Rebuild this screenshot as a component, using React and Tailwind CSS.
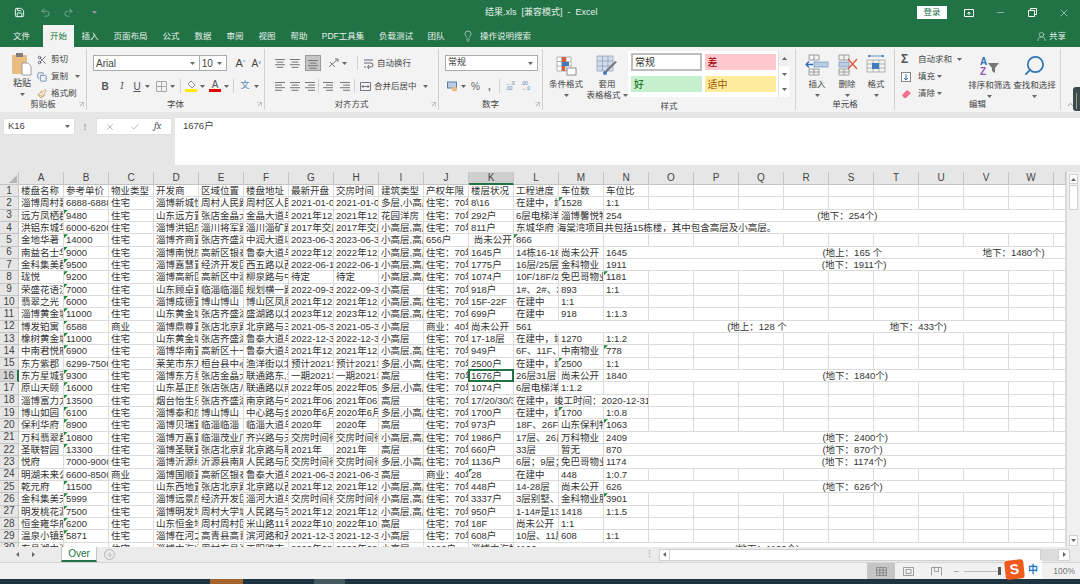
import React from 'react';
import { Save, Undo2, Redo2, Scissors, Copy, Paintbrush, Lightbulb, UserRound, Minus, X, Search, Check, Plus, ChevronUp } from 'lucide-react';

const COLS = 'ABCDEFGHIJKLMNOPQRSTUVW'.split('');
const J = '住宅：70年';
const gap = (n) => ' '.repeat(n);
const toEnd = (t, c) => ({ t, c });

// '!' in front of a value = green error triangle in that cell
const ROWS = [
  ['楼盘名称', '参考单价', '物业类型', '开发商', '区域位置', '楼盘地址', '最新开盘', '交房时间', '建筑类型', '产权年限', '楼层状况', '工程进度', '车位数', '车位比'],
  ['淄博周村碧桂园', '6888-6888', '住宅', '淄博新城悦盛', '周村人民路与', '周村区人民路', '2021-01-01', '2021-01-01', '多层,小高层', J, '8\\16', '在建中，竣工', '!1528', '1:1'],
  ['远方凤栖郡府', '!9480', '住宅', '山东远方置业', '张店金晶大道', '金晶大道与华', '2021年12月', '2021年12月', '花园洋房', J, '292户', '6层电梯洋房', '淄博馨悦物业', toEnd('254' + gap(74) + '(地下：254个)', 'col-[15/-1]')],
  ['洪铝东城华府', '6000-6200', '住宅', '淄博洪铝房产', '淄川将军路与', '淄川淄矿路与', '2017年交房', '2017年交房', '小高层,高层', J, '811户', toEnd('东城华府 海棠湾项目共包括15栋楼，其中包含高层及小高层。', 'col-[13/-1]')],
  ['金地华著', '!14000', '住宅', '淄博齐商置业', '张店齐盛湖畔', '中润大道以南', '2023-06-30', '2023-06-30', '小高层,高层', '656户', ' 尚未公开', '!866', '', ''],
  ['南益名士华府', '!9000', '住宅', '淄博南悦房产', '高新区银泰城', '鲁泰大道与北', '2022年12月', '2022年12月', '小高层,高层', J, '1645户', '14栋16-18层', '尚未公开', toEnd('1645' + gap(74) + '(地上：165 个' + gap(38) + '地下：1480个)', 'col-[15/-1]')],
  ['金科集美郡府', '!9500', '住宅', '淄博嘉慧置业', '经济开发区北', '西五路以西', '2022-06-10', '2022-06-10', '小高层,高层', J, '1775户', '16层/25层', '金科物业', toEnd('1911' + gap(74) + '(地下：1911个)', 'col-[15/-1]')],
  ['珑悦', '!9200', '住宅', '淄博高新区城', '高新区中润大', '柳泉路与中润', '待定', '待定', '小高层,高层', J, '1074户', '10F/18F/26F', '免巴哥物业服', '!1181'],
  ['荣盛花语江南', '!7000', '住宅', '山东顾卓置业', '临淄临淄区政', '规划横一路与', '2022-09-30', '2022-09-30', '小高层', J, '918户', '1#、2#、3#', '893', '1:1'],
  ['翡翠之光', '!6000', '住宅', '淄博成德置业', '博山博山', '博山区凤凰山', '2021年12月', '2021年12月', '小高层,高层', J, '15F-22F', '在建中', '1:1', ''],
  ['淄博黄金城', '!11000', '住宅', '山东黄金城置', '张店齐盛湖畔', '盛湖路以北', '2023年12月', '2023年12月', '小高层,高层', J, '699户', '在建中', '918', '1:1.3'],
  ['博发铂寓', '!6588', '商业', '淄博鼎尊置业', '张店北京路与', '北京路与三赢', '2021-05-30', '2021-05-30', '小高层', '商业：40年', '尚未公开', toEnd('561' + gap(74) + '(地上：128 个' + gap(39) + '地下：433个)', 'col-[13/-1]')],
  ['橡树黄金城', '!11000', '住宅', '山东黄金城置', '张店齐盛湖畔', '鲁泰大道与北', '2022-12-30', '2022-12-30', '小高层', J, '17-18层', '在建中，竣工', '1270', '1:1.2'],
  ['中南君悦府', '!6900', '住宅', '淄博华南置业', '高新区十一中', '鲁泰大道与北', '2021年12月', '2021年12月', '小高层,高层', J, '949户', '6F、11F、18F', '中南物业', '!778'],
  ['东方紫郡', '6299-7500', '住宅', '莱芜市东方置', '桓台县中心城', '渔洋街以北', '预计2021年', '预计2021年', '多层,小高层', J, '2500户', '在建中，竣工', '!2500', '1:1'],
  ['东方星城壹号', '!9300', '住宅', '淄博东方星城', '张店金晶大道', '联通路东,金', '一期2021年', '一期2021年', '高层', J, '1676户', '26层31层', '尚未公开', toEnd('1840' + gap(74) + '(地下：1840个)', 'col-[15/-1]')],
  ['原山天颐', '!16000', '住宅', '山东基正房产', '张店张店八大', '联通路以南', '2022年05月', '2022年05月', '多层,小高层', J, '1074户', '6层电梯洋房', '1:1.2', ''],
  ['淄博富力力城', '!13500', '住宅', '烟台怡生乐居', '张店齐盛湖畔', '南京路与中润', '2021年06月', '2021年06月', '高层', J, '17/20/30/33', toEnd('在建中，竣工时间：2020-12-31', 'col-[13/16]')],
  ['博山如园', '!6100', '住宅', '淄博泰和房产', '博山博山', '中心路与金鳞', '2020年6月', '2020年6月', '多层,小高层', J, '1700户', '在建中，竣工', '!1700', '1:0.8'],
  ['保利华府', '!8900', '住宅', '淄博贝瑞置业', '临淄临淄', '临淄大道与晏', '2020年', '2020年', '高层', J, '973户', '18F、26F', '山东保利物业', '!1063'],
  ['万科翡翠郡', '!10800', '住宅', '淄博万嘉置业', '临淄茂业广场', '齐兴路与天齐', '交房时间待定', '交房时间待定', '小高层,高层', J, '1986户', '17层、26层', '万科物业', toEnd('2409' + gap(74) + '(地下：2400个)', 'col-[15/-1]')],
  ['圣联智园', '!13300', '住宅', '淄博圣联置业', '张店北京路与', '北京路与联通', '2021年', '2021年', '高层', J, '660户', '33层', '暂无', toEnd('870' + gap(76) + '(地下：870个)', 'col-[15/-1]')],
  ['悦府', '7000-9000', '住宅', '淄博沂源绿城', '沂源县南麻镇', '人民路与历山', '交房时间待定', '交房时间待定', '多层,小高层', J, '1136户', '6层；9层；', '免巴哥物业服', toEnd('1174' + gap(74) + '(地下：1174个)', 'col-[15/-1]')],
  ['明湖未来公馆', '6600-8500', '商业', '淄博国顺置业', '高新区银泰城', '鲁泰大道与北', '2021-06-30', '2021-06-30', '高层', '商业：40年', '!28', '在建中', '448', '1:0.7'],
  ['乾元府', '!11500', '住宅', '山东西地置业', '张店北京路与', '北京路以西', '2021年12月', '2021年12月', '小高层,高层', J, '448户', '14-28层', '尚未公开', toEnd('626' + gap(76) + '(地下：626个)', 'col-[15/-1]')],
  ['金科集美天宸', '!5999', '住宅', '淄博远景房产', '经济开发区北', '淄河大道与北', '交房时间待定', '交房时间待定', '小高层,高层', J, '3337户', '3层别墅、', '金科物业服务', '!3901'],
  ['明发桃花源', '!7500', '住宅', '淄博明发地产', '周村大学城', '人民路与学府', '2021年12月', '2021年12月', '小高层,高层', J, '950户', '1-14#是13层', '1418', '1:1.5'],
  ['恒金雍华府', '!6200', '住宅', '山东恒金地产', '周村周村区政', '米山路11号', '2022年10月', '2022年10月', '高层', J, '18F', '尚未公开', '1:1', ''],
  ['温泉小镇别院', '!5871', '住宅', '淄博在河之洲', '高青县高青', '滨河路和开发', '2021-12-30', '2021-12-30', '小高层', J, '608户', '10层、11层', '608', '1:1'],
  ['东昌湖中海滨', '', '住宅', '淄博中海兴业', '周村东昌湖', '正阳路南', '2022年08月', '2022年08月', '小高层', '1100户', '淄博中海物业', toEnd('1100' + gap(75) + '(地下：1100个)', 'col-[13/-1]')],
];

const Caret = ({ className = '' }) => (
  <svg width="5" height="3" viewBox="0 0 5 3" className={`shrink-0 ${className}`}><path d="M0 0h5L2.5 3z" fill="#666" /></svg>
);

const Corner = () => (
  <svg width="5" height="5" viewBox="0 0 5 5" className="absolute right-[2px] bottom-[3px]">
    <path d="M0 0h5v5M1 4l3-3" fill="none" stroke="#8a8a8a" strokeWidth=".7" />
  </svg>
);

const Group = ({ w, label, launcher = true, children }) => (
  <div className={`relative flex flex-col shrink-0 border-r border-[#d2d2d2] mb-[2px] ${w}`}>
    <div className="h-[53px]">{children}</div>
    <div className="text-center leading-[11px]">{label}</div>
    {launcher && <Corner />}
  </div>
);

const Lines = ({ kind }) => {
  const rows = {
    left: [[0, 10], [0, 7], [0, 10], [0, 7]],
    center: [[0, 10], [1.5, 7], [0, 10], [1.5, 7]],
    right: [[0, 10], [3, 7], [0, 10], [3, 7]],
  }[kind];
  return (
    <svg width="10" height="9" viewBox="0 0 10 9">
      {rows.map(([x, w], i) => <rect key={i} x={x} y={i * 2.6} width={w} height="1" fill="#777" />)}
    </svg>
  );
};

const BigTool = ({ w, icon, lines }) => (
  <div className={`flex flex-col items-center shrink-0 ${w}`}>
    <div className="h-[25px] flex items-end justify-center">{icon}</div>
    <div className="mt-[3px] leading-[11px] whitespace-nowrap">{lines[0]}</div>
    {lines[1] ? <div className="leading-[11px] whitespace-nowrap flex items-center gap-[2px]">{lines[1]}<Caret /></div> : <Caret className="mt-[4px]" />}
  </div>
);

const Swatch = ({ className, text }) => (
  <div className={`h-[16px] w-[71px] flex items-center pl-[3px] text-[10px] ${className}`}>{text}</div>
);

const CellsIcon = ({ mark }) => (
  <svg width="24" height="22" viewBox="0 0 24 22" fill="none">
    <path d="M4 1h10v5H4zM9 1v5M4 15h10v6H4zM9 15v6M4 18h10" stroke="#888" strokeWidth=".8" />
    {mark === 'insert' ? (
      <>
        <rect x="9" y="8" width="14" height="5" fill="#b9cde4" stroke="#6d8fb5" strokeWidth=".7" />
        <path d="M1 10.500h7M4 7.500l-3 3 3 3" stroke="#2f6fb7" strokeWidth="1.300" />
      </>
    ) : (
      <>
        <rect x="4" y="8" width="10" height="5" fill="#b9cde4" stroke="#6d8fb5" strokeWidth=".7" />
        <path d="M13 5l9 10M22 5l-9 10" stroke="#e2573b" strokeWidth="1.300" />
      </>
    )}
  </svg>
);

function Ribbon() {
  return (
    <div className="flex h-[65px] bg-[#f3f3f3] pt-[2px] text-[8.500px] text-[#444]">
      <Group w="w-[87px]" label="剪贴板">
        <div className="flex pl-[10px] pt-[3px]">
          <div className="flex flex-col items-center w-[24px]">
            <svg width="22" height="24" viewBox="0 0 22 24">
              <rect x="1" y="3" width="15" height="19" rx="1" fill="#e9bd82" />
              <rect x="5" y="1" width="7" height="4" fill="#7d7d7d" />
              <path d="M11 11h6l3 3v9h-9z" fill="#fff" stroke="#8a8a8a" strokeWidth=".8" />
            </svg>
            <div className="mt-[2px] leading-[11px] text-[9px]">粘贴</div>
            <Caret className="mt-[4px]" />
          </div>
          <div className="ml-[3px] flex flex-col gap-[6px] pt-[2px]">
            <div className="flex items-center gap-[4px] h-[11px]"><Scissors size={10} className="text-[#557]" />剪切</div>
            <div className="flex items-center gap-[4px] h-[11px]"><Copy size={10} className="text-[#5a7fa8]" />复制<Caret className="ml-[3px]" /></div>
            <div className="flex items-center gap-[4px] h-[11px]"><Paintbrush size={10} className="text-[#c79a4a]" />格式刷</div>
          </div>
        </div>
      </Group>

      <Group w="w-[178px]" label="字体">
        <div className="pl-[6px] pt-[6px]">
          <div className="flex items-center h-[16px]">
            <div className="w-[108px] h-full bg-white border border-[#ababab] flex items-center justify-between px-[2px] pr-[4px] text-[10px]">Arial<Caret /></div>
            <div className="w-[28px] h-full bg-white border border-l-0 border-[#ababab] flex items-center justify-between px-[2px] pr-[4px] text-[10px]">10<Caret /></div>
            <div className="ml-[5px] w-[16px] text-[11px] text-center">A<sup className="text-[5px] text-[#2f6fb7]">^</sup></div>
            <div className="w-[16px] text-[10px] text-center">A<sup className="text-[5px] text-[#2f6fb7]">v</sup></div>
          </div>
          <div className="flex items-center h-[16px] mt-[7px] text-[10px] text-[#555]">
            <b className="ml-[5px] w-[14px] text-center">B</b>
            <i className="ml-[3px] w-[14px] text-center font-serif">I</i>
            <span className="ml-[2px] w-[12px] text-center underline">U</span>
            <Caret className="ml-[2px]" />
            <svg width="11" height="11" viewBox="0 0 11 11" className="ml-[6px]"><path d="M.5.5h10v10H.500zM5.500.5v10M.5 5.500h10" fill="none" stroke="#aaa" /></svg>
            <Caret className="ml-[3px]" />
            <div className="ml-[5px] h-[14px] border-l border-[#d2d2d2]" />
            <div className="ml-[4px] w-[12px] flex flex-col items-center">
              <svg width="10" height="9" viewBox="0 0 10 9"><path d="M5 1l4 4-3 3-4-4z" fill="#fff" stroke="#777" strokeWidth=".8" /></svg>
              <div className="w-[12px] h-[3px] bg-[#ffeb00]" />
            </div>
            <Caret className="ml-[3px]" />
            <div className="ml-[4px] w-[12px] flex flex-col items-center leading-[9px] text-[10px]">
              A<div className="w-[12px] h-[3px] bg-[#e80000]" />
            </div>
            <Caret className="ml-[3px]" />
            <div className="ml-[4px] h-[14px] border-l border-[#d2d2d2]" />
            <div className="ml-[5px] w-[12px] text-center text-[9px] text-[#5a86b5]">文</div>
            <Caret className="ml-[3px]" />
          </div>
        </div>
      </Group>

      <Group w="w-[174px]" label="对齐方式">
        <div className="pl-[10px] pt-[6px]">
          <div className="flex items-center h-[16px]">
            <div className="w-[15px]"><Lines kind="center" /></div>
            <div className="w-[15px]"><Lines kind="center" /></div>
            <div className="w-[16px] h-[16px] bg-[#c6c6c6] border border-[#9a9a9a] flex items-end justify-center pb-[1px]"><Lines kind="center" /></div>
            <svg width="12" height="12" viewBox="0 0 12 12" className="ml-[7px]"><path d="M1 10L10 2M7 2h3v3M2 5l5 5" fill="none" stroke="#777" /></svg>
            <Caret className="ml-[2px]" />
            <div className="ml-[10px] h-[14px] border-l border-[#d2d2d2]" />
            <svg width="11" height="11" viewBox="0 0 11 11" className="ml-[5px]"><path d="M1 2h9M1 5h7a2 2 0 010 4H5M6 7L4.500 9 6 11M1 9h2" fill="none" stroke="#556" strokeWidth=".9" /></svg>
            <span className="ml-[3px]">自动换行</span>
          </div>
          <div className="flex items-center h-[16px] mt-[7px]">
            <div className="w-[15px]"><Lines kind="left" /></div>
            <div className="w-[15px]"><Lines kind="center" /></div>
            <div className="w-[12px]"><Lines kind="right" /></div>
            <div className="ml-[1px] h-[14px] border-l border-[#d2d2d2]" />
            <div className="ml-[4px] w-[17px] relative"><Lines kind="right" /></div>
            <div className="w-[13px]"><Lines kind="right" /></div>
            <div className="ml-[1px] h-[14px] border-l border-[#d2d2d2]" />
            <svg width="11" height="11" viewBox="0 0 11 11" className="ml-[5px]"><path d="M.5 1.500h10v8H.500zM2 5.500h7M3.500 4L2 5.500 3.500 7M7.500 4L9 5.500 7.500 7" fill="none" stroke="#556" strokeWidth=".8" /></svg>
            <span className="ml-[3px]">合并后居中</span>
            <Caret className="ml-[6px]" />
          </div>
        </div>
      </Group>

      <Group w="w-[104px]" label="数字">
        <div className="pl-[6px] pt-[6px]">
          <div className="w-[93px] h-[16px] bg-white border border-[#ababab] flex items-center justify-between px-[2px] pr-[4px] text-[9px]">常规<Caret /></div>
          <div className="flex items-center h-[16px] mt-[7px] text-[10px] text-[#666]">
            <svg width="11" height="11" viewBox="0 0 11 11" className="ml-[2px]"><rect x=".5" y="1" width="9" height="6" fill="#b9cde4" stroke="#5a7fa8" /><circle cx="7.500" cy="8" r="2.500" fill="#e9bd82" /></svg>
            <Caret className="ml-[3px]" />
            <span className="ml-[5px]">%</span>
            <span className="ml-[8px] font-bold">,</span>
            <div className="ml-[8px] h-[14px] border-l border-[#d2d2d2]" />
            <div className="ml-[6px] text-[5px] leading-[5px] text-[#5a7fa8]">←.0<br />.00</div>
            <div className="ml-[6px] text-[5px] leading-[5px] text-[#5a7fa8]">.00<br />→.0</div>
          </div>
        </div>
      </Group>

      <Group w="w-[253px]" label="样式" launcher={false}>
        <div className="flex pt-[2px]">
          <BigTool w="w-[44px] ml-[1px]" lines={['条件格式']} icon={
            <svg width="21" height="20" viewBox="0 0 21 20"><path d="M1 1h14v14H1zM1 5.500h14M1 10h14M5.500 1v14M10 1v14" fill="#fff" stroke="#999" strokeWidth=".7" /><rect x="6" y="1" width="4" height="5" fill="#d9603f" /><rect x="6" y="6" width="7" height="4" fill="#3d7dbd" /><rect x="6" y="10" width="3" height="5" fill="#d9603f" /><rect x="11" y="12" width="9" height="7" fill="#fff" stroke="#777" strokeWidth=".8" /></svg>
          } />
          <BigTool w="w-[38px]" lines={['套用', '表格格式']} icon={
            <svg width="22" height="21" viewBox="0 0 22 21"><path d="M1 1h16v15H1zM1 6h16M1 11h16M6.500 1v15M12 1v15" fill="#cfdcec" stroke="#8a9bb0" strokeWidth=".7" /><path d="M21 7l-9 9-3 3 1-4 9-9z" fill="#777" /><circle cx="9" cy="18" r="2" fill="#3d7dbd" /></svg>
          } />
          <div className="ml-[2px] w-[161px] h-[46px] bg-white flex">
            <div className="flex-1 p-[3px] grid grid-cols-2 gap-x-[3px] gap-y-[3px]">
              <div className="h-[18px] w-[71px] -mt-[1px] bg-white border-[2px] border-[#bdbdbd] flex items-center pl-[2px] text-[10px] text-[#333]">常规</div>
              <Swatch className="bg-[#ffc7ce] text-[#9c0006]" text="差" />
              <Swatch className="bg-[#c6efce] text-[#006100]" text="好" />
              <Swatch className="bg-[#ffeb9c] text-[#9c5700]" text="适中" />
            </div>
            <div className="w-[11px] flex flex-col bg-[#f0f0f0] border-l border-[#e0e0e0] text-[#888]">
              <div className="h-[15px] flex items-center justify-center"><Caret className="rotate-180" /></div>
              <div className="h-[16px] bg-white flex items-center justify-center"><Caret /></div>
              <div className="h-[15px] bg-white flex items-center justify-center"><Caret /></div>
            </div>
          </div>
        </div>
      </Group>

      <Group w="w-[99px]" label="单元格" launcher={false}>
        <div className="flex pl-[6px] pt-[2px]">
          <BigTool w="w-[30px]" lines={['插入']} icon={<CellsIcon mark="insert" />} />
          <BigTool w="w-[30px]" lines={['删除']} icon={<CellsIcon mark="delete" />} />
          <BigTool w="w-[28px]" lines={['格式']} icon={
            <svg width="20" height="22" viewBox="0 0 20 22" fill="none"><path d="M1 6h18v12H1zM1 10h18M1 14h18M7 6v12M13 6v12" stroke="#999" strokeWidth=".7" /><rect x="6" y="9" width="7" height="6" fill="#3d7dbd" /><path d="M2 2h16M2 2l2-1v2zM18 2l-2-1v2z" stroke="#3d7dbd" strokeWidth=".8" /></svg>
          } />
        </div>
      </Group>

      <Group w="w-[166px]" label="编辑" launcher={false}>
        <div className="flex pt-[3px]">
          <div className="ml-[6px] w-[67px] flex flex-col gap-[6px] pt-[2px]">
            <div className="flex items-center h-[11px]"><span className="w-[17px] text-[12px] text-[#555] font-bold leading-[11px]">Σ</span>自动求和<Caret className="ml-[5px]" /></div>
            <div className="flex items-center h-[11px]"><span className="w-[17px]"><svg width="10" height="10" viewBox="0 0 10 10"><rect x=".5" y=".5" width="9" height="9" fill="#fff" stroke="#888" /><path d="M5 2v6M3 6l2 2 2-2" fill="none" stroke="#2f6fb7" /></svg></span>填充<Caret className="ml-[2px]" /></div>
            <div className="flex items-center h-[11px]"><span className="w-[17px]"><svg width="11" height="9" viewBox="0 0 11 9"><path d="M1 6l5-5 4 3-5 5H3z" fill="#ef6f8c" /></svg></span>清除<Caret className="ml-[2px]" /></div>
          </div>
          <BigTool w="w-[45px] -ml-[1px]" lines={['排序和筛选']} icon={
            <div className="flex items-center gap-[1px] leading-[10px] text-[10px] font-bold">
              <div className="flex flex-col"><span className="text-[#2f6fb7]">A</span><span className="text-[#8e5bb5]">Z</span></div>
              <svg width="11" height="11" viewBox="0 0 11 11"><path d="M0 1h11L7 6v5L4 9V6z" fill="#777" /></svg>
            </div>
          } />
          <BigTool w="w-[45px]" lines={['查找和选择']} icon={<Search size={23} strokeWidth={1.800} className="text-[#2f75b5] -scale-x-100" />} />
        </div>
      </Group>

      <div className="flex-1 relative">
        <ChevronUp size={9} className="absolute left-[5px] bottom-[3px] text-[#777]" />
      </div>
    </div>
  );
}

function Sheet() {
  const cell = 'relative overflow-hidden whitespace-pre pl-[2px] border-r border-b border-[#dcdcdc] bg-white';
  const headCell = 'flex items-center justify-center bg-[#e6e6e6] border-r border-b border-[#c4c4c4] text-[10px] text-[#444]';
  return (
    <div className="flex h-[375px]">
      <div className="w-[1066px] overflow-hidden relative">
        <div className="grid grid-cols-[19px_repeat(23,45px)_12px] grid-rows-[13px] auto-rows-[12.330px] text-[9.500px] leading-[12px] text-[#333]">
          <div className={`${headCell} relative`}>
            <svg width="8" height="8" viewBox="0 0 8 8" className="absolute right-[1px] bottom-[1px]"><path d="M8 0v8H0z" fill="#b5b5b5" /></svg>
          </div>
          {COLS.map((c) => (
            <div key={c} className={c === 'K' ? `${headCell} !bg-[#cfcfcf] !border-b-2 !border-b-[#217346] text-[#1f6b41]` : headCell}>{c}</div>
          ))}
          <div className={headCell} />

          {ROWS.map((row, r) => {
            const selectedRow = r === 15;
            const spill = row[row.length - 1];
            const lastIsSpill = typeof spill === 'object';
            const taken = row.length + (lastIsSpill && spill.c === 'col-[13/16]' ? 2 : 0);
            const toEndSpill = lastIsSpill && spill.c !== 'col-[13/16]';
            return (
              <React.Fragment key={r}>
                <div className={selectedRow ? `${headCell} !bg-[#d6d6d6] !border-r-2 !border-r-[#217346] text-[#1f6b41]` : headCell}>{r + 1}</div>
                {row.map((v, i) => {
                  if (typeof v === 'object') return <div key={i} className={`${cell} ${v.c}`}>{v.t}</div>;
                  const flagged = v.startsWith('!');
                  const isSel = selectedRow && i === 10;
                  return (
                    <div key={i} className={isSel ? `${cell} z-10 !overflow-visible` : cell}>
                      {flagged ? v.slice(1) : v}
                      {flagged && <span className="absolute left-0 top-0 w-[4px] h-[4px] bg-[#1f8a3b] [clip-path:polygon(0_0,100%_0,0_100%)]" />}
                      {isSel && <span className="absolute -left-[1px] -top-[1px] -right-[1px] -bottom-[1px] border-2 border-[#217346]" />}
                    </div>
                  );
                })}
                {!toEndSpill && Array.from({ length: 24 - taken }).map((_, i) => <div key={`e${i}`} className={cell} />)}
              </React.Fragment>
            );
          })}
        </div>
      </div>
      <div className="w-[14px] bg-[#f0f0f0] border-l border-[#d9d9d9] flex flex-col px-[2px] pt-[2px]">
        <div className="h-[10px] bg-white border border-[#d0d0d0] flex items-center justify-center"><Caret className="rotate-180" /></div>
        <div className="mt-[1px] h-[25px] bg-white border border-[#d0d0d0]" />
        <div className="mt-auto mb-[1px] h-[11px] bg-white border border-[#d0d0d0] flex items-center justify-center"><Caret /></div>
      </div>
    </div>
  );
}

export default function App() {
  return (
    <div className="relative w-[1080px] h-[584px] overflow-hidden bg-[#e6e6e6] [font-family:'Liberation_Sans','Noto_Sans_CJK_SC',sans-serif]">
      {/* title bar */}
      <div className="flex items-center h-[25px] bg-[#217346] text-white text-[9px]">
        <Save size={11} className="ml-[14px]" />
        <Undo2 size={11} className="ml-[15px] opacity-40" />
        <Caret className="ml-[2px] opacity-40" />
        <Redo2 size={11} className="ml-[5px] opacity-40" />
        <Caret className="ml-[2px] opacity-40" />
        <Caret className="ml-[11px] invert" />
        <div className="ml-[388px] w-[112px] whitespace-pre text-[#e4efe9]">结果.xls  [兼容模式]  -  Excel</div>
        <div className="ml-[320px] w-[30px] h-[13px] bg-white text-[#217346] flex items-center justify-center text-[8.500px]">登录</div>
        <svg width="10" height="8" viewBox="0 0 10 8" className="ml-[17px]"><path d="M.5.500h9v7h-9zM5 6V3M3.500 4.500L5 3l1.500 1.500" fill="none" stroke="#fff" /></svg>
        <Minus size={11} strokeWidth={1} className="ml-[21px]" />
        <svg width="9" height="9" viewBox="0 0 9 9" className="ml-[22px]"><path d="M.5 2.500h6v6h-6zM2.500 2.500v-2h6v6h-2" fill="none" stroke="#fff" /></svg>
        <X size={12} strokeWidth={1} className="ml-[21px]" />
      </div>

      {/* tabs */}
      <div className="flex items-center h-[22px] bg-[#217346] text-[8.500px] text-[#e8f1ec]">
        <div className="w-[43px] text-center">文件</div>
        <div className="w-[31px] h-full bg-[#f3f3f3] text-[#217346] flex items-center justify-center">开始</div>
        <div className="w-[32px] text-center">插入</div>
        <div className="w-[49px] text-center">页面布局</div>
        <div className="w-[32px] text-center">公式</div>
        <div className="w-[32px] text-center">数据</div>
        <div className="w-[32px] text-center">审阅</div>
        <div className="w-[32px] text-center">视图</div>
        <div className="w-[32px] text-center">帮助</div>
        <div className="w-[56px] text-center">PDF工具集</div>
        <div className="w-[50px] text-center">负载测试</div>
        <div className="w-[30px] text-center">团队</div>
        <Lightbulb size={12} strokeWidth={1.200} className="ml-[11px]" />
        <div className="ml-[6px]">操作说明搜索</div>
        <div className="ml-auto mr-[14px] flex items-center gap-[2px]"><UserRound size={11} strokeWidth={1.200} />共享</div>
      </div>

      <Ribbon />

      {/* formula bar */}
      <div className="flex h-[53px] pt-[6px] text-[9.500px] text-[#444]">
        <div className="ml-[3px] w-[72px] h-[17px] bg-white border border-[#e0e0e0] flex items-center justify-between px-[4px]">K16<Caret /></div>
        <div className="w-[21px] h-[17px] flex items-center justify-center text-[#999] tracking-[1px] text-[8px] font-bold">⋮</div>
        <div className="w-[76px] h-[17px] bg-white border border-[#e0e0e0] flex items-center text-[#aaa]">
          <X size={10} className="ml-[8px]" />
          <Check size={10} className="ml-[15px]" />
          <i className="ml-[14px] text-[#555] font-serif text-[10px]">fx</i>
        </div>
        <div className="ml-[3px] flex-1 bg-white pl-[8px] pt-[1px] leading-[13px]">1676户</div>
      </div>
      <div className="h-[7px]" />

      <Sheet />

      {/* sheet tabs + horizontal scrollbar */}
      <div className="flex items-center h-[16px] bg-[#ebebeb] border-b border-[#d4d4d4] text-[#b5b5b5]">
        <Caret className="ml-[15px] rotate-90" />
        <Caret className="ml-[11px] -rotate-90" />
        <div className="ml-[25px] w-[36px] h-full bg-white border-b-2 border-[#217346] border-x border-x-[#c4c4c4] flex items-center justify-center text-[10px] text-[#217346]">Over</div>
        <div className="ml-[7px] w-[11px] h-[11px] rounded-full border border-[#b5b5b5] flex items-center justify-center"><Plus size={8} /></div>
        <div className="ml-[530px] text-[9px] font-bold">⋮</div>
        <div className="ml-[5px] w-[11px] h-[12px] bg-white border border-[#d0d0d0] flex items-center justify-center"><Caret className="rotate-90" /></div>
        <div className="w-[371px] h-[12px] bg-white border-y border-r border-[#d0d0d0]" />
        <div className="w-[17px] h-[12px] bg-[#dcdcdc]" />
        <div className="w-[12px] h-[12px] bg-white border border-[#d0d0d0] flex items-center justify-center"><Caret className="-rotate-90" /></div>
      </div>

      {/* status bar */}
      <div className="flex items-center h-[16px] bg-[#f1f1f1] text-[#777]">
        <div className="ml-[867px] w-[28px] h-full bg-[#c6c6c6] flex items-center justify-center">
          <svg width="11" height="9" viewBox="0 0 11 9"><path d="M.5.500h10v8H.500zM.5 3.200h10M.5 5.800h10M3.800.5v8M7.200.5v8" fill="none" stroke="#777" strokeWidth=".7" /></svg>
        </div>
        <svg width="11" height="9" viewBox="0 0 11 9" className="ml-[8px]"><path d="M.5.500h10v8H.500zM3 2.500h5v4H3z" fill="none" stroke="#888" strokeWidth=".8" /></svg>
        <svg width="11" height="9" viewBox="0 0 11 9" className="ml-[17px]"><path d="M.5.500h10v8M.5.500v8M3.500.5v4h4v-4" fill="none" stroke="#888" strokeWidth=".8" /></svg>
        <Minus size={7} className="ml-[11px]" />
        <div className="ml-[4px] w-[34px] h-px bg-[#bbb]" />
        <div className="w-[3px] h-[8px] bg-[#555]" />
        <div className="ml-auto mr-[5px] text-[8.500px]">100%</div>
      </div>

      {/* taskbar strip under the window */}
      <div className="flex h-[5px] bg-[#1e3440]">
        <div className="ml-[210px] w-[33px] bg-[#a5642e]" />
        <div className="ml-[71px] w-[31px] bg-[#465a60]" />
      </div>

      {/* IME badge over the status bar */}
      <div className="absolute left-[1005px] top-[560px] w-[37px] h-[19px] flex items-center bg-white/90">
        <div className="w-[19px] h-[19px] bg-[#ef5a1f] rounded-[3px] -rotate-6 text-white font-bold text-[14px] leading-[19px] text-center">S</div>
        <div className="ml-[4px] text-[#1677c9] font-bold text-[10px]">中</div>
      </div>

      {/* desktop gadget peeking in at the right edge */}
      <div className="absolute right-0 top-[87px] w-[7px] h-[24px] rounded-l-[3px] bg-[#3c4a50]">
        <div className="ml-[3px] mt-[6px] w-[1px] h-[16px] bg-[#9aa36a]" />
      </div>
    </div>
  );
}
